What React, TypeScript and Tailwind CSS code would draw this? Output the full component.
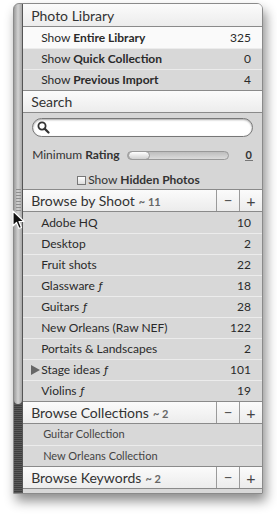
import React from "react";

type Item = { name: string; count: number; flag?: boolean; arrow?: boolean };

const shoots: Item[] = [
  { name: "Adobe HQ", count: 10 },
  { name: "Desktop", count: 2 },
  { name: "Fruit shots", count: 22 },
  { name: "Glassware", count: 18, flag: true },
  { name: "Guitars", count: 28, flag: true },
  { name: "New Orleans (Raw NEF)", count: 122 },
  { name: "Portaits & Landscapes", count: 2 },
  { name: "Stage ideas", count: 101, flag: true, arrow: true },
  { name: "Violins", count: 19, flag: true },
];

const SectionHeader: React.FC<{ title: string; count?: number; buttons?: boolean }> = ({
  title,
  count,
  buttons,
}) => (
  <div className="flex h-[23px] items-stretch border-y border-[#8a8a8a] bg-gradient-to-b from-[#fbfbfb] to-[#ececec]">
    <div className="flex flex-1 items-center whitespace-nowrap pl-[8px] text-[14px] leading-none text-[#333]">
      {title}
      {count !== undefined && (
        <span className="ml-[4px] mt-[2px] text-[11px] font-bold text-[#666]">~ {count}</span>
      )}
    </div>
    {buttons && (
      <>
        <div className="flex w-[23px] items-center justify-center border-l border-[#9a9a9a] text-[15px] text-[#555]">
          −
        </div>
        <div className="flex w-[23px] items-center justify-center border-l border-[#9a9a9a] text-[16px] text-[#444]">
          +
        </div>
      </>
    )}
  </div>
);

const Row: React.FC<{ children: React.ReactNode; count?: number; white?: boolean; first?: boolean }> = ({
  children,
  count,
  white,
  first,
}) => (
  <div
    className={`flex h-[21px] items-center whitespace-nowrap pr-[11px] text-[12px] text-[#2a2a2a] ${
      first ? "" : "border-t border-[#ececec]"
    } ${white ? "bg-[#fafafa]" : "bg-[#d8d8d8]"}`}
  >
    <div className="flex flex-1 items-center">{children}</div>
    {count !== undefined && <span>{count}</span>}
  </div>
);

export default function App() {
  return (
    <div
      className="relative h-[522px] w-[277px] overflow-hidden bg-white"
      style={{ fontFamily: "Lato, 'Open Sans', sans-serif" }}
    >
      <div className="ml-[13px] mt-[3px] flex w-[250px] overflow-hidden rounded-t-[6px] border border-[#8a8a8a] shadow-[3px_7px_12px_rgba(0,0,0,0.45)]">
        {/* scrollbar strip */}
        <div className="flex w-[9px] flex-col bg-[#4e4e4e]">
          <div className="flex h-[400px] flex-col items-center rounded-b-[4px] bg-gradient-to-r from-[#9d9d9d] via-[#d2d2d2] to-[#a8a8a8]">
            <div className="mt-[185px] flex flex-col gap-[2px]">
              {Array.from({ length: 8 }).map((_, i) => (
                <div key={i} className="h-px w-[5px] bg-[#8f8f8f]" />
              ))}
            </div>
          </div>
          <div className="flex-1 bg-[repeating-linear-gradient(180deg,#5a5a5a_0px,#5a5a5a_1px,#3e3e3e_1px,#3e3e3e_2px)]" />
        </div>

        {/* main panel */}
        <div className="flex w-[240px] flex-col border-l border-[#555] bg-[#d8d8d8]">
          <div className="flex h-[23px] items-center border-b border-[#8a8a8a] bg-gradient-to-b from-[#fbfbfb] to-[#ececec] pl-[8px] text-[14px] text-[#333]">
            Photo Library
          </div>
          <Row white first count={325}>
            <span className="pl-[18px]">
              Show <b>Entire Library</b>
            </span>
          </Row>
          <Row count={0}>
            <span className="pl-[18px]">
              Show <b>Quick Collection</b>
            </span>
          </Row>
          <Row count={4}>
            <span className="pl-[18px]">
              Show <b>Previous Import</b>
            </span>
          </Row>

          <SectionHeader title="Search" />
          <div className="flex h-[76px] flex-col bg-[#d6d6d6] px-[9px] pt-[5px]">
            <div className="flex h-[20px] items-center rounded-full border border-[#777] bg-white pl-[4px] shadow-[inset_0_1px_2px_rgba(0,0,0,0.35)]">
              <svg width="13" height="13" viewBox="0 0 13 13">
                <circle cx="5" cy="5" r="3.6" fill="none" stroke="#333" strokeWidth="1.8" />
                <line x1="7.6" y1="7.6" x2="11.5" y2="11.5" stroke="#333" strokeWidth="2.2" strokeLinecap="round" />
              </svg>
            </div>
            <div className="mt-[9px] flex items-center whitespace-nowrap text-[12px] text-[#333]">
              <span className="mr-[7px] shrink-0">
                Minimum <b>Rating</b>
              </span>
              <div className="relative h-[9px] w-[102px] shrink-0 rounded-full border border-[#999] bg-gradient-to-b from-[#bdbdbd] to-[#dcdcdc]">
                <div className="absolute left-0 top-[-1px] h-[9px] w-[22px] rounded-full border border-[#999] bg-gradient-to-b from-white to-[#d0d0d0]" />
              </div>
              <span className="ml-[16px] border-b border-[#777] px-[1px] text-[11px] font-bold leading-[11px]">0</span>
            </div>
            <div className="mt-[7px] flex items-center whitespace-nowrap pl-[45px] text-[12px] text-[#333]">
              <div className="mr-[2px] h-[9px] w-[9px] shrink-0 border border-[#777] bg-gradient-to-b from-white to-[#ddd]" />
              <span>
                Show <b>Hidden Photos</b>
              </span>
            </div>
          </div>

          <SectionHeader title="Browse by Shoot" count={11} buttons />
          {shoots.map((s, i) => (
            <Row key={s.name} first={i === 0} count={s.count}>
              {s.arrow ? (
                <span className="flex items-center pl-[8px]">
                  <svg width="9" height="10" viewBox="0 0 9 10" className="mr-[1px]">
                    <polygon points="0,0 9,5 0,10" fill="#666" />
                  </svg>
                  {s.name}
                  {s.flag && <i className="ml-[4px]">ƒ</i>}
                </span>
              ) : (
                <span className="pl-[18px]">
                  {s.name}
                  {s.flag && <i className="ml-[4px]">ƒ</i>}
                </span>
              )}
            </Row>
          ))}

          <SectionHeader title="Browse Collections" count={2} buttons />
          <Row first>
            <span className="pl-[20px] text-[11px] text-[#444]">Guitar Collection</span>
          </Row>
          <Row>
            <span className="pl-[20px] text-[11px] text-[#444]">New Orleans Collection</span>
          </Row>

          <SectionHeader title="Browse Keywords" count={2} buttons />
          <div className="h-[4px] bg-[#d8d8d8]" />
        </div>
      </div>

      {/* mouse pointer */}
      <svg className="absolute left-[12px] top-[210px]" width="13" height="20" viewBox="0 0 13 20">
        <path d="M1 1 L1 16 L4.5 12.5 L7 18.5 L9.5 17.5 L7 11.5 L12 11.5 Z" fill="#111" stroke="#fff" strokeWidth="1.2" strokeLinejoin="round" />
      </svg>
    </div>
  );
}
